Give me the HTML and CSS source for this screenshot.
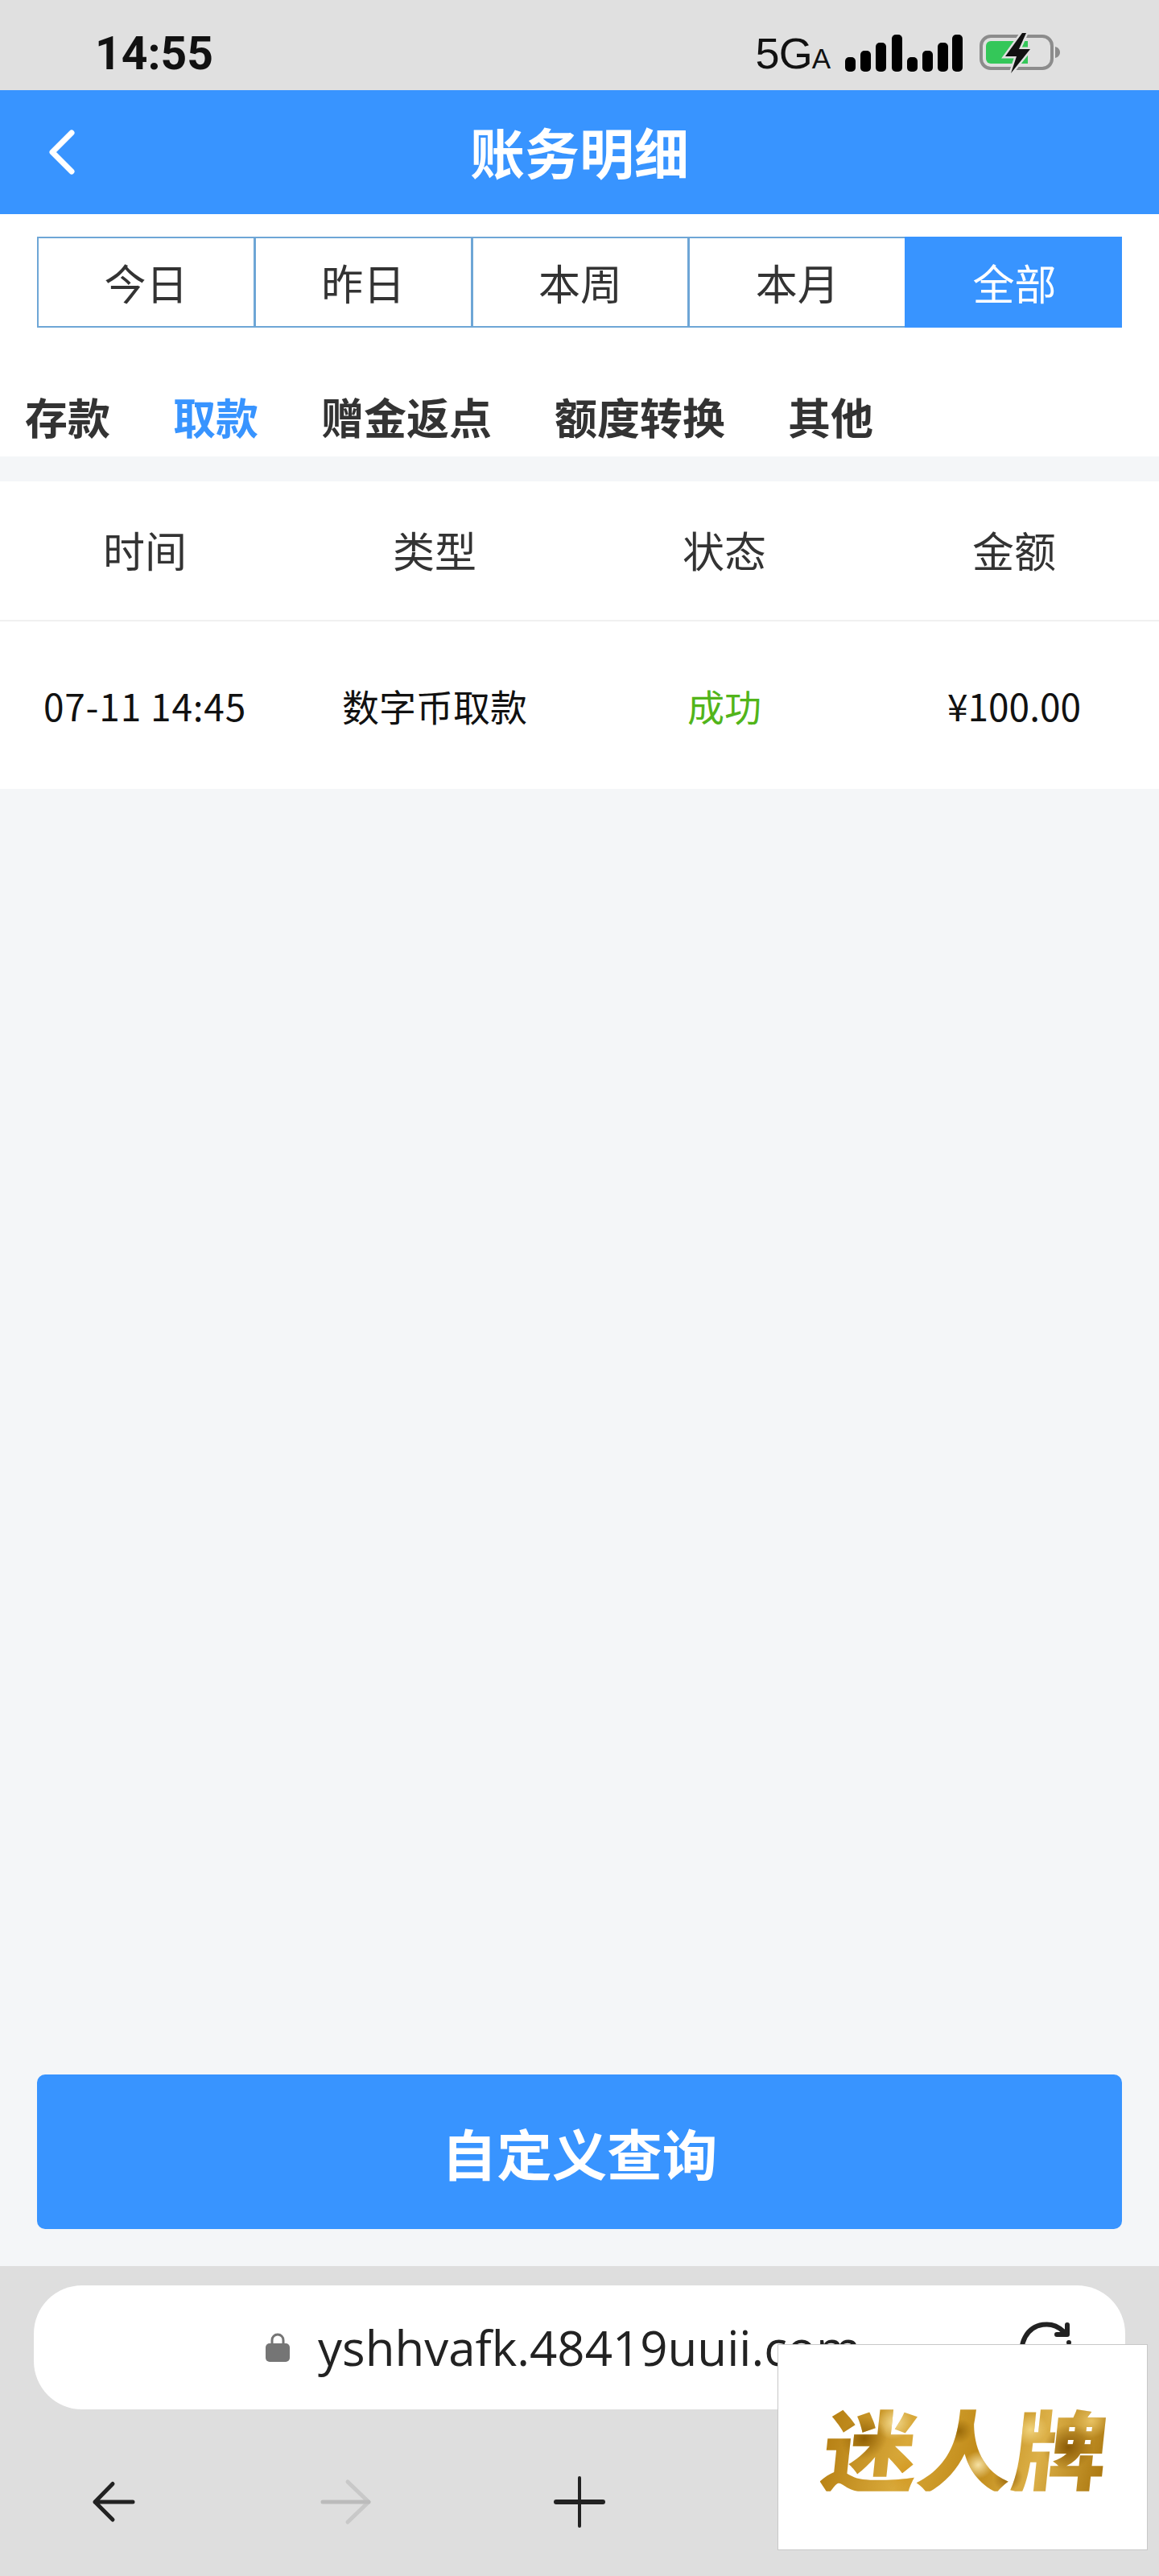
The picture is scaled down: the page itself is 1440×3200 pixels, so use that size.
FILE: index.html
```html
<!DOCTYPE html>
<html lang="zh-CN">
<head>
    <meta charset="UTF-8">
    <meta name="viewport" content="width=device-width, initial-scale=1.0">
    <title>账务明细</title>
    <link rel="stylesheet" href="styles.css">
</head>
<body>
    <div class="status-bar">
        <span class="status-time">14:55</span>
        <div class="status-icons">
            <span class="net">5G<small>A</small></span>
            <svg class="signal" width="146" height="46" viewBox="0 0 146 46">
                <rect x="0" y="28" width="13" height="18" rx="5"/>
                <rect x="19" y="20" width="13" height="26" rx="5"/>
                <rect x="38" y="10" width="13" height="36" rx="5"/>
                <rect x="58" y="0" width="13" height="46" rx="5"/>
                <rect x="77" y="28" width="13" height="18" rx="5"/>
                <rect x="96" y="20" width="13" height="26" rx="5"/>
                <rect x="115" y="10" width="13" height="36" rx="5"/>
                <rect x="133" y="0" width="13" height="46" rx="5"/>
            </svg>
            <svg class="battery" width="104" height="50" viewBox="0 0 104 50">
                <rect x="2" y="4" width="88" height="40" rx="12" fill="none" stroke="#8c8c8c" stroke-width="4"/>
                <path d="M8 16a6 6 0 0 1 6-6h46v28H14a6 6 0 0 1-6-6z" fill="#34c759"/>
                <path d="M94 17c4 1 6 4 6 7s-2 6-6 7z" fill="#8c8c8c"/>
                <path d="M53 0 32 29h14l-7 21 24-30H49l9-20z" fill="#e0e0e0" stroke="#e0e0e0" stroke-width="5"/>
                <path d="M53 0 32 29h14l-7 21 24-30H49l9-20z" fill="#111"/>
            </svg>
        </div>
    </div>

    <header class="page-header">
        <svg class="back-icon" width="40" height="56" viewBox="0 0 40 56">
            <path d="M33 4 9 28l24 24" fill="none" stroke="#fff" stroke-width="7" stroke-linecap="round" stroke-linejoin="round"/>
        </svg>
        <h1>账务明细</h1>
    </header>

    <div class="filter-panel">
        <div class="date-tabs">
            <div class="date-tab">今日</div>
            <div class="date-tab">昨日</div>
            <div class="date-tab">本周</div>
            <div class="date-tab">本月</div>
            <div class="date-tab active">全部</div>
        </div>
        <div class="type-tabs">
            <span>存款</span>
            <span class="active">取款</span>
            <span>赠金返点</span>
            <span>额度转换</span>
            <span>其他</span>
        </div>
    </div>

    <main class="content">
        <div class="record-table">
            <div class="record-row record-head">
                <div>时间</div>
                <div>类型</div>
                <div>状态</div>
                <div>金额</div>
            </div>
            <div class="record-row record-item">
                <div class="time-cell">07-11 14:45</div>
                <div>数字币取款</div>
                <div class="ok">成功</div>
                <div>¥100.00</div>
            </div>
        </div>
        <button class="query-button">自定义查询</button>
    </main>

    <div class="browser-bar">
        <div class="url-bar">
            <svg class="lock" width="30" height="36" viewBox="0 0 30 36">
                <path d="M8 15V9a7 7 0 0 1 14 0v6" fill="none" stroke="#757575" stroke-width="3"/>
                <rect x="0" y="13" width="30" height="23" rx="5" fill="#757575"/>
            </svg>
            <span class="url-text">yshhvafk.48419uuii.com</span>
            <svg class="reload" width="68" height="68" viewBox="0 0 68 68">
                <path d="M55 14A30 30 0 1 0 64 34" fill="none" stroke="#222" stroke-width="6" stroke-linecap="round"/>
                <path d="M60 6v12H47" fill="none" stroke="#222" stroke-width="6" stroke-linecap="round" stroke-linejoin="round"/>
                <circle cx="62" cy="28" r="3" fill="#222"/>
            </svg>
        </div>
        <nav class="nav-row">
            <div class="nav-slot">
                <svg width="60" height="56" viewBox="0 0 60 56">
                    <path d="M26 5.5 4 28l22 22M4 28h47" fill="none" stroke="#222" stroke-width="5" stroke-linecap="round" stroke-linejoin="round"/>
                </svg>
            </div>
            <div class="nav-slot">
                <svg width="68" height="60" viewBox="0 0 68 60">
                    <path d="M34 5 60 30 34 55" fill="none" stroke="#c8c8c8" stroke-width="5" stroke-linecap="round" stroke-linejoin="round"/>
                    <path d="M3 30h57" fill="none" stroke="#bbb" stroke-width="5" stroke-linecap="round"/>
                </svg>
            </div>
            <div class="nav-slot">
                <svg width="64" height="64" viewBox="0 0 64 64">
                    <path d="M32 2v60" fill="none" stroke="#222" stroke-width="4" stroke-linecap="round"/>
                    <path d="M3 32h58" fill="none" stroke="#222" stroke-width="6" stroke-linecap="round"/>
                </svg>
            </div>
            <div class="nav-slot"></div>
            <div class="nav-slot"></div>
        </nav>
    </div>

    <div class="watermark"><span>迷人牌</span></div>
</body>
</html>
```

FILE: styles.css
```css
* {
    box-sizing: border-box;
}
body {
    margin: 0;
    width: 1440px;
    height: 3200px;
    display: flex;
    flex-direction: column;
    position: relative;
    overflow: hidden;
    background: #f4f6f8;
    font-family: "Noto Sans CJK SC", "Noto Sans", sans-serif;
    color: #333;
}

/* status bar */
.status-bar {
    height: 112px;
    flex: none;
    background: #e0e0e0;
    display: flex;
    align-items: center;
    justify-content: space-between;
    padding: 20px 119px 0 118px;
}
.status-time {
    font-family: Roboto, sans-serif;
    font-weight: 700;
    font-size: 57px;
    color: #111;
}
.status-icons {
    display: flex;
    align-items: center;
    gap: 19px;
}
.net {
    font-family: "Liberation Sans", sans-serif;
    font-size: 54px;
    color: #111;
    letter-spacing: -1px;
}
.net small {
    font-size: 35px;
}
.battery {
    margin-left: 2px;
}

/* header */
.page-header {
    height: 154px;
    flex: none;
    background: #3894ff;
    display: flex;
    align-items: center;
    justify-content: center;
    position: relative;
}
.page-header h1 {
    margin: 0 0 3px;
    font-size: 68px;
    font-weight: 700;
    line-height: 1;
    color: #fff;
}
.back-icon {
    position: absolute;
    left: 56px;
    top: 49px;
}

/* filters */
.filter-panel {
    flex: none;
    background: #fff;
    height: 301px;
    padding-top: 28px;
}
.date-tabs {
    display: flex;
    margin: 0 46px;
    height: 113px;
}
.date-tab {
    flex: 1;
    display: flex;
    align-items: center;
    justify-content: center;
    font-size: 52px;
    border: 2px solid #6ea6d6;
    border-left-width: 3px;
    border-right-width: 0;
    color: #333;
}
.date-tab:first-child {
    border-left-width: 2px;
}
.date-tab.active {
    background: #3894ff;
    border-color: #3894ff;
    color: #fff;
}
.type-tabs {
    display: flex;
    gap: 78px;
    padding: 72px 0 0 31px;
    font-size: 53px;
    font-weight: 700;
    line-height: 76px;
}
.type-tabs .active {
    color: #3894ff;
}

/* records */
.content {
    flex: 1;
    display: flex;
    flex-direction: column;
    justify-content: space-between;
    padding: 31px 0 46px;
}
.record-table {
    background: #fff;
}
.record-row {
    display: grid;
    grid-template-columns: repeat(4, 1fr);
    align-items: center;
    text-align: center;
}
.record-head {
    height: 174px;
    padding-bottom: 4px;
    font-size: 52px;
    border-bottom: 2px solid #f0f0f0;
}
.record-item {
    height: 208px;
    font-size: 46px;
    color: #111;
}
.time-cell {
    letter-spacing: 0.8px;
}
.ok {
    color: #52b51a;
}
.query-button {
    display: block;
    margin: 0 46px;
    height: 192px;
    border: none;
    border-radius: 10px;
    background: #3894ff;
    color: #fff;
    font-family: inherit;
    font-size: 68.5px;
    font-weight: 700;
}

/* browser chrome */
.browser-bar {
    height: 385px;
    flex: none;
    background: #dedede;
    padding-top: 24px;
}
.url-bar {
    margin: 0 42px;
    height: 154px;
    border-radius: 60px;
    background: #fff;
    display: flex;
    align-items: center;
    position: relative;
    padding-left: 288px;
}
.lock {
    margin-right: 35px;
}
.url-text {
    font-family: "Open Sans", sans-serif;
    font-size: 60px;
    font-weight: 500;
    color: #222;
    white-space: nowrap;
}
.reload {
    position: absolute;
    right: 64px;
    top: 43px;
}
.nav-row {
    display: flex;
    height: 207px;
    padding-top: 23px;
}
.nav-slot {
    flex: 1;
    display: flex;
    align-items: center;
    justify-content: center;
}
.watermark {
    position: absolute;
    left: 966px;
    top: 2912px;
    width: 460px;
    height: 256px;
    background: #fff;
    border: 1px solid #c8c8c8;
    display: flex;
    align-items: center;
    justify-content: center;
}
.watermark span {
    font-family: "Noto Sans CJK SC", sans-serif;
    font-size: 118px;
    font-weight: 900;
    line-height: 1;
    white-space: nowrap;
    transform: translate(4px, 0) skewX(-6deg) scaleY(0.93);
    background:
        radial-gradient(circle at 14% 40%, #8f5f05 0, rgba(143, 95, 5, 0) 9%),
        radial-gradient(circle at 24% 22%, #f4dc92 0, rgba(244, 220, 146, 0) 8%),
        radial-gradient(circle at 30% 78%, #d49a24 0, rgba(212, 154, 36, 0) 10%),
        radial-gradient(circle at 47% 32%, #9a6a0a 0, rgba(154, 106, 10, 0) 8%),
        radial-gradient(circle at 55% 70%, #f6e2a4 0, rgba(246, 226, 164, 0) 9%),
        radial-gradient(circle at 66% 85%, #96640a 0, rgba(150, 100, 10, 0) 7%),
        radial-gradient(circle at 72% 30%, #f0d27c 0, rgba(240, 210, 124, 0) 8%),
        radial-gradient(circle at 86% 50%, #8a5a06 0, rgba(138, 90, 6, 0) 10%),
        radial-gradient(circle at 93% 20%, #e8c262 0, rgba(232, 194, 98, 0) 7%),
        linear-gradient(100deg, #b37c10 0%, #d9a93a 30%, #c08a18 55%, #dcb048 75%, #a8740c 100%);
    -webkit-background-clip: text;
    background-clip: text;
    color: transparent;
}
```
